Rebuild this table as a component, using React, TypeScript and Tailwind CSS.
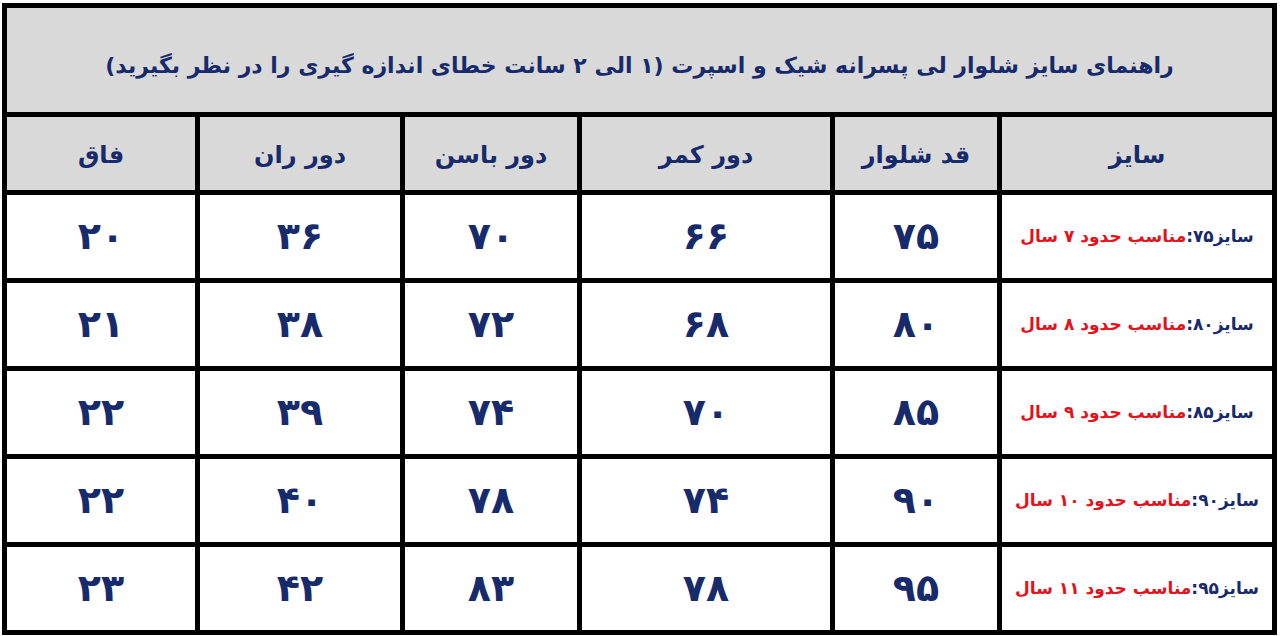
const headers = ['سایز', 'قد شلوار', 'دور کمر', 'دور باسن', 'دور ران', 'فاق']

const rows = [
  { size: '۷۵', age: '۷', cells: ['۷۵', '۶۶', '۷۰', '۳۶', '۲۰'] },
  { size: '۸۰', age: '۸', cells: ['۸۰', '۶۸', '۷۲', '۳۸', '۲۱'] },
  { size: '۸۵', age: '۹', cells: ['۸۵', '۷۰', '۷۴', '۳۹', '۲۲'] },
  { size: '۹۰', age: '۱۰', cells: ['۹۰', '۷۴', '۷۸', '۴۰', '۲۲'] },
  { size: '۹۵', age: '۱۱', cells: ['۹۵', '۷۸', '۸۳', '۴۲', '۲۳'] },
]

export default function App() {
  return (
    <div className="w-[1280px] h-[636px] bg-white pl-[2px] pt-[3px]" style={{ fontFamily: '"DejaVu Sans", sans-serif' }}>
      <div
        dir="rtl"
        className="w-[1275px] grid grid-cols-[270px_162px_248px_172px_200px_188px] grid-rows-[104px_73px_repeat(5,83px)] gap-[5px] p-[5px] bg-black font-bold text-[#172a6b]"
      >
        {/* title */}
        <div className="col-span-6 bg-[#d9d9d9] flex items-center justify-center pt-[10px] text-[22px]">
          راهنمای سایز شلوار لی پسرانه شیک و اسپرت (۱ الی ۲ سانت خطای اندازه گیری را در نظر بگیرید)
        </div>

        {headers.map((h) => (
          <div key={h} className="bg-[#d9d9d9] flex items-center justify-center pt-[2px] text-[24px]">
            {h}
          </div>
        ))}

        {rows.map((r) => (
          <>
            <div key={r.size + 's'} className="bg-white flex items-center justify-center text-[17px]">
              <span>سایز{r.size}:</span>
              <span className="text-[#e5121b]">مناسب حدود {r.age} سال</span>
            </div>
            {r.cells.map((c, i) => (
              <div key={r.size + i} className="bg-white flex items-center justify-center text-[38px]">
                {c}
              </div>
            ))}
          </>
        ))}
      </div>
    </div>
  )
}
